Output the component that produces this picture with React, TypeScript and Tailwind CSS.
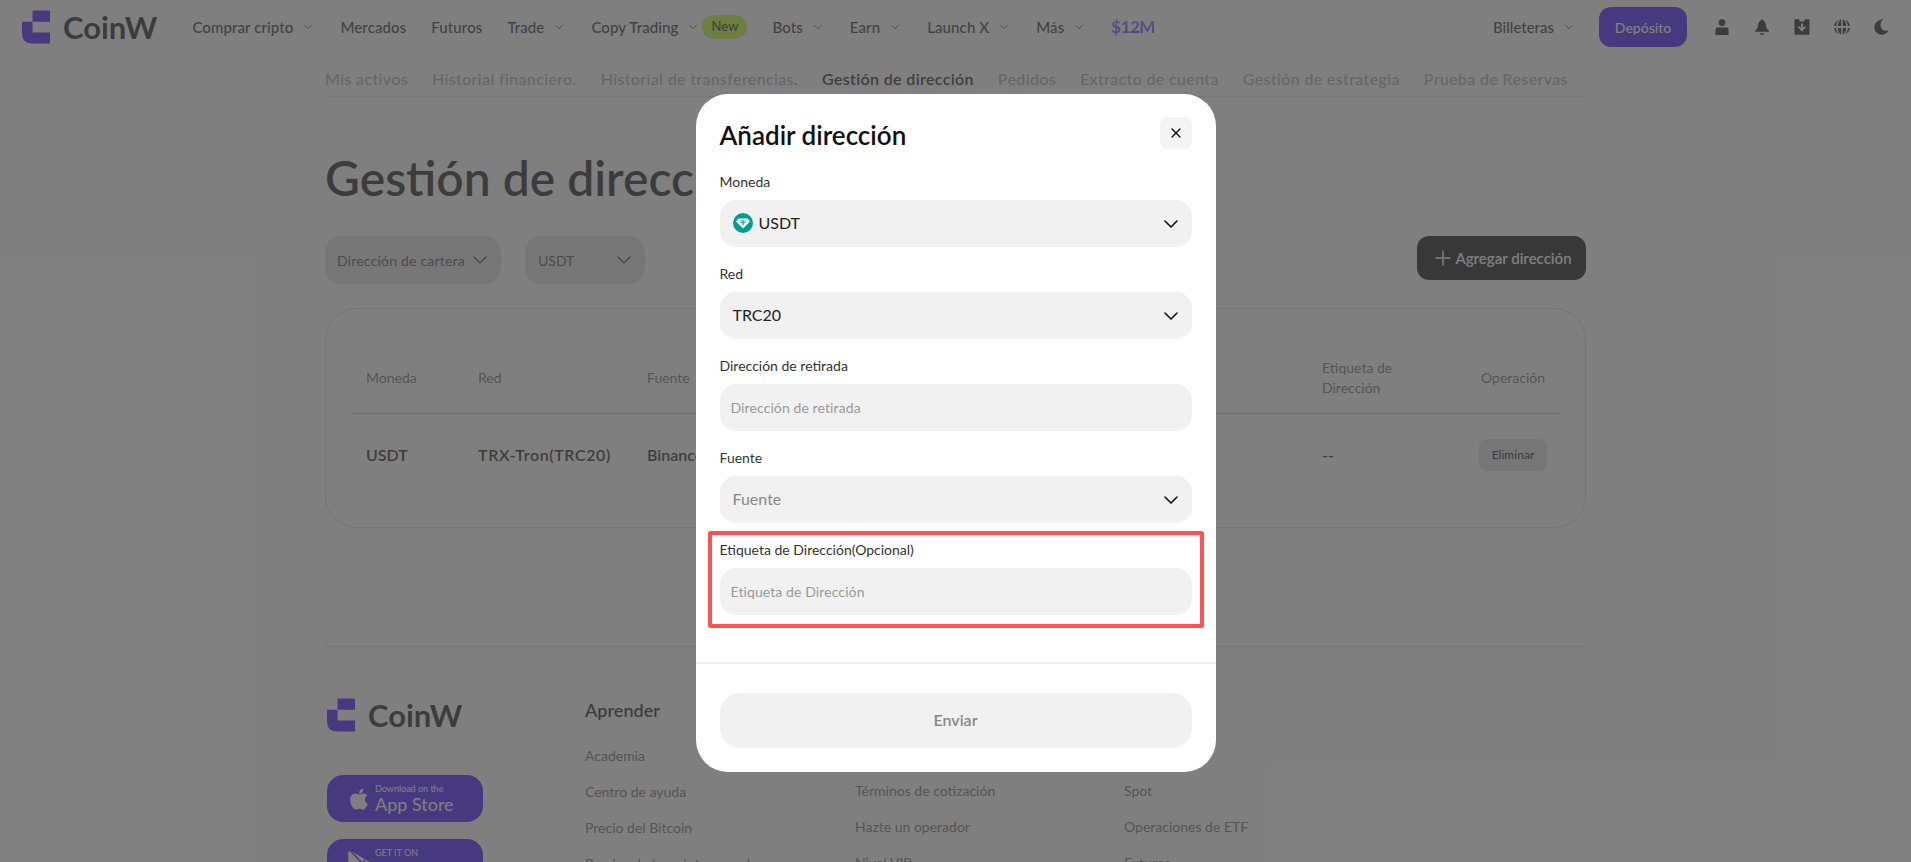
import React from 'react';
import { ChevronDown, Plus, X } from 'lucide-react';
import { FaApple, FaGooglePlay } from 'react-icons/fa';

const navItems = [
   { label: 'Comprar cripto', chevron: true },
   { label: 'Mercados' },
   { label: 'Futuros' },
   { label: 'Trade', chevron: true },
   { label: 'Copy Trading', chevron: true, badge: true },
   { label: 'Bots', chevron: true },
   { label: 'Earn', chevron: true },
   { label: 'Launch X', chevron: true },
   { label: 'Más', chevron: true },
];

const subNav = [
   'Mis activos',
   'Historial financiero.',
   'Historial de transferencias.',
   'Gestión de dirección',
   'Pedidos',
   'Extracto de cuenta',
   'Gestión de estrategia',
   'Prueba de Reservas',
];

function Logo({ className }: { className: string }) {
   return (
      <svg viewBox="0 0 85 100" className={className} fill="#3607ff">
         <rect x="32" y="0" width="53" height="34" />
         <path d="M0 34H32V67H85V100H30Q0 100 0 70Z" />
      </svg>
   );
}

function TopBar() {
   return (
      <header className="flex h-[54px] items-center pl-[22px] pr-[21px]">
         <Logo className="h-[34px] w-[28px]" />
         <span className="ml-[13px] text-[31px] font-bold text-[#111] leading-none">CoinW</span>
         <nav className="ml-[35px] flex items-center gap-[25px] text-[15px] font-medium tracking-[0.1px] text-[#222]">
            {navItems.map(item => (
               <div key={item.label} className="flex items-center">
                  <span>{item.label}</span>
                  {item.chevron && <ChevronDown className="ml-2 h-[14px] w-[14px] text-[#333]" strokeWidth={1.5} />}
                  {item.badge && (
                     <span className="ml-0.5 flex h-6 w-[45px] items-center justify-center rounded-full bg-[#c2f820] text-[13px] text-[#222]">
                        New
                     </span>
                  )}
               </div>
            ))}
            <span className="bg-gradient-to-b from-[#9a80ff] to-[#3607ff] bg-clip-text text-[17px] font-black tracking-[-0.5px] text-transparent">
               $12M
            </span>
         </nav>
         <div className="ml-auto flex items-center">
            <span className="text-[15px] font-medium text-[#222]">Billeteras</span>
            <ChevronDown className="ml-2 h-[14px] w-[14px] text-[#333]" strokeWidth={1.5} />
            <button className="ml-[23px] h-10 w-[88px] rounded-xl bg-[#3607ff] text-[14px] font-medium text-white">
               Depósito
            </button>
            <div className="ml-[27px] flex items-center gap-6 text-[#111]">
               <svg viewBox="0 0 16 16" className="h-4 w-4" fill="currentColor">
                  <circle cx="8" cy="3.6" r="3.4" />
                  <path d="M1.5 10.5C1.5 9 2.5 8.4 4 8.4H12C13.5 8.4 14.5 9 14.5 10.5V16H1.5Z" />
               </svg>
               <svg viewBox="0 0 16 16" className="h-4 w-4" fill="currentColor">
                  <path d="M8 0.2C9 0.2 9.4 1 9.5 1.8C11.3 2.6 11.8 4.5 12 7C12.2 9 13.4 10.4 15 11.8V12.8H1V11.8C2.6 10.4 3.8 9 4 7C4.2 4.5 4.7 2.6 6.5 1.8C6.6 1 7 0.2 8 0.2Z" />
                  <rect x="6.3" y="14.2" width="3.4" height="1.6" />
               </svg>
               <svg viewBox="0 0 16 16" className="h-4 w-4" fill="currentColor">
                  <path fillRule="evenodd" d="M0.5 0.3H5.5V2.5H10.5V0.3H15.5V15.7H0.5ZM7 4.5V9L4.8 6.9L3.6 8.1L8 12.4L12.4 8.1L11.2 6.9L9 9V4.5Z" />
               </svg>
               <svg viewBox="0 0 16 16" className="h-4 w-4" fill="currentColor">
                  <path d="M7.2 0.2V6.9H3.7C3.9 4 5 1.5 7.2 0.2ZM8.8 0.2C11 1.5 12.1 4 12.3 6.9H8.8ZM5 0.7C3.3 2.2 2.3 4.5 2.1 6.9H0.1C0.4 4.2 2.3 1.7 5 0.7ZM11 0.7C13.7 1.7 15.6 4.2 15.9 6.9H13.9C13.7 4.5 12.7 2.2 11 0.7ZM0.1 9.1H2.1C2.3 11.5 3.3 13.8 5 15.3C2.3 14.3 0.4 11.8 0.1 9.1ZM3.7 9.1H7.2V15.8C5 14.5 3.9 12 3.7 9.1ZM8.8 9.1H12.3C12.1 12 11 14.5 8.8 15.8ZM13.9 9.1H15.9C15.6 11.8 13.7 14.3 11 15.3C12.7 13.8 13.7 11.5 13.9 9.1Z" />
               </svg>
               <svg viewBox="0 0 16 16" className="h-4 w-4" fill="currentColor">
                  <path d="M9.5 0.3C7 2 6 5 6.8 7.8C7.6 10.6 10.5 12.6 14.6 11.6C13.2 14.2 10.8 15.8 8 15.8C3.8 15.8 0.3 12.3 0.3 8.2C0.3 4 4.5 0.2 9.5 0.3Z" />
               </svg>
            </div>
         </div>
      </header>
   );
}

function SubNav() {
   return (
      <div className="mx-[325px] flex h-[43px] items-center gap-6 border-b border-[#e4e4e4] pt-2 text-[16px] font-medium tracking-[0.35px] text-[#a5a5a5]">
         {subNav.map(label => (
            <span key={label} className={label === 'Gestión de dirección' ? 'font-semibold text-[#111]' : ''}>
               {label}
            </span>
         ))}
      </div>
   );
}

function AddressTable() {
   const cols = 'grid grid-cols-[112px_169px_675px_159px_95px] items-center';
   return (
      <div className="mt-6 h-[220px] rounded-[32px] border border-[#d4d4d4] px-6">
         <div className={`${cols} mt-[24px] h-[81px] border-b border-[#c8c8c8] pt-[9px] text-[14px] text-[#666]`}>
            <span className="pl-4">Moneda</span>
            <span className="pl-4">Red</span>
            <span className="pl-4">Fuente</span>
            <span className="pl-4 leading-[20px]">
               Etiqueta de
               <br />
               Dirección
            </span>
            <span className="pl-4">Operación</span>
         </div>
         <div className={`${cols} h-[82px] text-[16px] font-semibold text-[#111]`}>
            <span className="pl-4">USDT</span>
            <span className="pl-4 tracking-[0.6px]">TRX-Tron(TRC20)</span>
            <span className="pl-4">Binance</span>
            <span className="pl-4">--</span>
            <span className="pl-[14px]">
               <span className="flex h-8 w-[68px] items-center justify-center rounded-lg bg-[#dfdfdf] text-[12px] font-medium">
                  Eliminar
               </span>
            </span>
         </div>
      </div>
   );
}

function PageBody() {
   return (
      <main className="mx-[325px] h-[550px] border-b border-[#d8d8d8] pt-[51px]">
         <h1 className="text-[48px] font-semibold leading-[60px] text-[#111]">Gestión de dirección</h1>
         <div className="mt-[28px] flex items-start justify-between">
            <div className="flex gap-6">
               <div className="flex h-12 w-[176px] items-center justify-between rounded-2xl bg-[#e0e0e0] pl-3 pr-[9px] text-[14px] tracking-[0.2px] text-[#444]">
                  Dirección de cartera
                  <ChevronDown className="h-6 w-6" strokeWidth={1.5} />
               </div>
               <div className="flex h-12 w-[120px] items-center justify-between rounded-2xl bg-[#e0e0e0] pl-[13px] pr-[9px] text-[14px] text-[#444]">
                  USDT
                  <ChevronDown className="h-6 w-6" strokeWidth={1.5} />
               </div>
            </div>
            <button className="flex h-11 w-[169px] items-center justify-center rounded-xl bg-[#000] text-[15px] font-semibold text-white">
               <Plus className="h-6 w-6" strokeWidth={1.5} />
               Agregar dirección
            </button>
         </div>
         <AddressTable />
      </main>
   );
}

function FooterCol({ title, links, offset }: { title?: string; links: string[]; offset?: boolean }) {
   return (
      <div className="flex flex-col">
         <div className="h-6">{title && <h3 className="text-[18px] font-semibold leading-6 text-[#111]">{title}</h3>}</div>
         <ul className={`${offset ? 'mt-[59px]' : 'mt-[24px]'} flex flex-col gap-[16px] text-[14px] leading-5 text-[#666]`}>
            {links.map(link => (
               <li key={link} className="whitespace-nowrap">
                  {link}
               </li>
            ))}
         </ul>
      </div>
   );
}

function Footer() {
   return (
      <footer className="mx-[327px] mt-[51px] grid grid-cols-[258px_270px_269px_1fr]">
         <div>
            <div className="flex items-center">
               <Logo className="h-[34px] w-[28px]" />
               <span className="ml-[13px] text-[31px] font-bold leading-none text-[#111]">CoinW</span>
            </div>
            <div className="mt-[43px] flex h-[47px] w-[156px] items-center rounded-2xl bg-[#3607ff] pl-5 text-white">
               <FaApple className="h-6 w-6" />
               <div className="ml-[4px] flex flex-col">
                  <span className="text-[9px] leading-[10px]">Download on the</span>
                  <span className="text-[18px] leading-[20px]">App Store</span>
               </div>
            </div>
            <div className="mt-[17px] flex h-[47px] w-[156px] items-center rounded-2xl bg-[#3607ff] pl-5 text-white">
               <FaGooglePlay className="h-6 w-6" />
               <div className="ml-[4px] flex flex-col">
                  <span className="text-[9px] leading-[10px]">GET IT ON</span>
                  <span className="text-[18px] leading-[20px]">Google Play</span>
               </div>
            </div>
         </div>
         <FooterCol title="Aprender" links={['Academia', 'Centro de ayuda', 'Precio del Bitcoin', 'Precios de las criptomonedas']} />
         <FooterCol links={['Términos de cotización', 'Hazte un operador', 'Nivel VIP']} offset />
         <FooterCol links={['Spot', 'Operaciones de ETF', 'Futuros']} offset />
         <FooterCol title="Sobre nosotros" links={['Acerca de', 'Verificación de CoinW', 'Tasa de comisión', 'Aviso legal']} />
      </footer>
   );
}

function Chevron() {
   return <ChevronDown className="h-6 w-6 text-[#111]" strokeWidth={1.6} />;
}

function TetherIcon() {
   return (
      <svg viewBox="0 0 20 20" className="h-5 w-5">
         <circle cx="10" cy="10" r="10" fill="#009f94" />
         <path d="M5.5 5.5H14.5L17 8.5L10 15.5L3 8.5Z" fill="#fff" />
         <path d="M7 7.4H13V8.3H10.6V9H12.6V9.7H10.6V12H9.4V9.7H7.4V9H9.4V8.3H7Z" fill="#009f94" />
      </svg>
   );
}

function Field({ label, children }: { label: string; children: React.ReactNode }) {
   return (
      <div>
         <div className="mb-2 h-5 text-[14px] leading-5 text-[#333]">{label}</div>
         {children}
      </div>
   );
}

function SelectBox({ children }: { children: React.ReactNode }) {
   return (
      <div className="flex h-[47px] items-center justify-between rounded-2xl bg-[#f1f1f1] pl-[13px] pr-[9px] text-[16px] text-[#222]">
         <span className="pb-[1px]">{children}</span>
         <Chevron />
      </div>
   );
}

function InputBox({ placeholder }: { placeholder: string }) {
   return (
      <div className="flex h-[47px] items-center rounded-2xl bg-[#f1f1f1] px-[11px] pb-[1px] text-[14px] tracking-[0.1px] text-[#999]">
         {placeholder}
      </div>
   );
}

function AddAddressModal() {
   return (
      <div className="absolute inset-0 bg-[#4e4e4e]/72">
         <div className="mx-auto mt-[94px] h-[678px] w-[520px] rounded-[32px] bg-white pt-[23px]">
            <div className="flex h-8 items-center justify-between px-6">
               <h2 className="mt-1 text-[26px] font-semibold text-[#111]">Añadir dirección</h2>
               <button className="flex h-8 w-8 items-center justify-center rounded-lg bg-[#f4f4f4] text-[#111]">
                  <X className="h-4 w-4" strokeWidth={2} />
               </button>
            </div>
            <div className="mt-[23px] flex flex-col gap-[17px] px-6">
               <Field label="Moneda">
                  <SelectBox>
                     <span className="flex items-center gap-[6px]">
                        <TetherIcon />
                        USDT
                     </span>
                  </SelectBox>
               </Field>
               <Field label="Red">
                  <SelectBox>TRC20</SelectBox>
               </Field>
               <Field label="Dirección de retirada">
                  <InputBox placeholder="Dirección de retirada" />
               </Field>
               <Field label="Fuente">
                  <SelectBox>
                     <span className="text-[#888]">Fuente</span>
                  </SelectBox>
               </Field>
               <div className="relative">
                  <Field label="Etiqueta de Dirección(Opcional)">
                     <InputBox placeholder="Etiqueta de Dirección" />
                  </Field>
                  <div className="absolute -inset-x-3 -top-[9px] -bottom-[13px] rounded-[2px] border-4 border-[#ff5252]" />
               </div>
            </div>
            <div className="mt-[47px] h-[2px] bg-[#eeeeee]" />
            <div className="px-6 pt-[29px]">
               <button className="h-[55px] w-full rounded-[20px] bg-[#f1f1f1] pb-[2px] text-[16px] font-semibold text-[#888]">
                  Enviar
               </button>
            </div>
         </div>
      </div>
   );
}

export default function App() {
   return (
      <div className="relative h-[862px] overflow-hidden bg-white font-['Lato',sans-serif]">
         <TopBar />
         <SubNav />
         <PageBody />
         <Footer />
         <AddAddressModal />
      </div>
   );
}
